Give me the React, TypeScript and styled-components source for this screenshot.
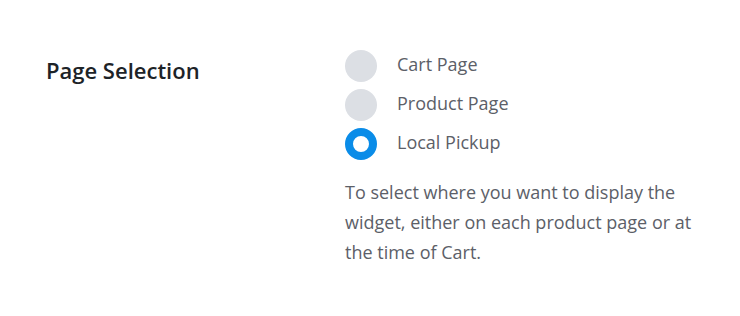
import React from "react"
import styled, { createGlobalStyle } from "styled-components"

const GlobalStyle = createGlobalStyle`
    body {
        margin : 0;
        background : #ffffff;
        font-family : "Open Sans", "Noto Sans", sans-serif;
    }
`

const SettingRow = styled.div`
    display : flex;
    align-items : flex-start;
    padding : 50px 0 0 46px;
`

const SettingLabel = styled.h3`
    width : 299px;
    margin : 0;
    padding-top : 5px;
    font-size : 22px;
    font-weight : 600;
    color : #1d2327;
    line-height : 30px;
`

const SettingControl = styled.div`
    display : flex;
    flex-direction : column;
    width : 372px;
`

const OptionList = styled.div`
    display : flex;
    flex-direction : column;
    gap : 7px;
`

const Option = styled.label`
    display : flex;
    align-items : center;
    gap : 20px;
    height : 32px;
    cursor : pointer;
`

const RadioDot = styled.span<{ $checked?: boolean }>`
    box-sizing : border-box;
    width : 32px;
    height : 32px;
    border-radius : 50%;
    background : ${p => p.$checked ? "#ffffff" : "#dcdfe4"};
    border : ${p => p.$checked ? "8px solid #0a8ce8" : "none"};
    flex-shrink : 0;
`

const OptionText = styled.span`
    font-size : 18px;
    color : #5c6068;
    position : relative;
    top : -2px;
`

const Description = styled.p`
    margin : 17px 0 0;
    font-size : 18px;
    line-height : 30px;
    color : #5c6068;
`

const options = ["Cart Page", "Product Page", "Local Pickup"]

function App(){
    return (
        <div>
            <GlobalStyle/>
            <SettingRow>
                <SettingLabel>Page Selection</SettingLabel>
                <SettingControl>
                    <OptionList>
                        {options.map(o => (
                            <Option key={o}>
                                <RadioDot $checked={o === "Local Pickup"}/>
                                <OptionText>{o}</OptionText>
                            </Option>
                        ))}
                    </OptionList>
                    <Description>
                        To select where you want to display the widget, either on each product page or at the time of Cart.
                    </Description>
                </SettingControl>
            </SettingRow>
        </div>
    )
}

export default App;
